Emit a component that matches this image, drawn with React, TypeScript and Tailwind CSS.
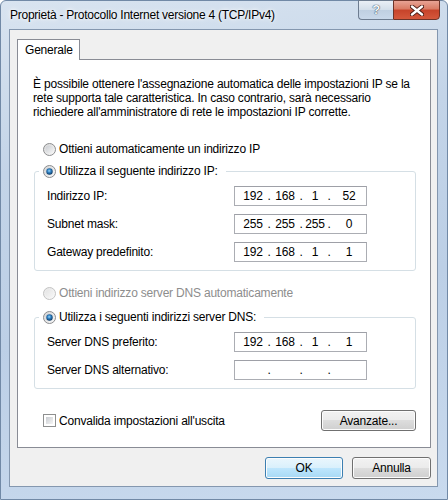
import { useId } from "react"
import clsx from "clsx"

const Radio = ({ checked = false, disabled = false }: { checked?: boolean; disabled?: boolean }) => {
  const id = useId().replace(/:/g, "")
  return (
    <svg width="13" height="13" viewBox="0 0 13 13" className="shrink-0">
      <defs>
        <linearGradient id={`o${id}`} x1="0" y1="0" x2="1" y2="1">
          <stop offset="0" stopColor={disabled ? "#e6e6e6" : "#d6d6d6"} />
          <stop offset="1" stopColor="#fafafa" />
        </linearGradient>
        <linearGradient id={`i${id}`} x1="0" y1="0" x2="1" y2="1">
          <stop offset="0" stopColor={disabled ? "#e4e4e4" : "#c9ccd1"} />
          <stop offset="1" stopColor="#f6f6f6" />
        </linearGradient>
        <radialGradient id={`d${id}`} cx="0.45" cy="0.4" r="0.6">
          <stop offset="0" stopColor="#9bd8fb" />
          <stop offset="0.45" stopColor="#2f80c2" />
          <stop offset="1" stopColor="#0c3862" />
        </radialGradient>
      </defs>
      <circle cx="6.5" cy="6.5" r="6" fill={`url(#o${id})`} stroke={disabled ? "#c3c3c3" : "#8b8c8e"} />
      <circle cx="6.5" cy="6.5" r="4" fill={`url(#i${id})`} />
      {checked && <circle cx="6.5" cy="6.5" r="3.2" fill={`url(#d${id})`} />}
    </svg>
  )
}

const Checkbox = () => (
  <div className="w-[13px] h-[13px] shrink-0 border border-[#8e8f8f] bg-white p-[2px]">
    <div className="w-full h-full bg-[linear-gradient(135deg,#c9ccd1,#f5f5f5)]" />
  </div>
)

const WinButton = ({ children, primary = false, className }: { children: React.ReactNode; primary?: boolean; className?: string }) => (
  <button
    className={clsx(
      "rounded-[3px] border text-[12px] text-black shadow-[inset_0_0_0_1px_#fcfcfc]",
      primary
        ? "border-[#3c7fb1] bg-[linear-gradient(#eaf6fd,#d9f0fc_50%,#bee6fd_50%,#a7d9f5)]"
        : "border-[#707070] bg-[linear-gradient(#f2f2f2,#ebebeb_50%,#dddddd_50%,#cfcfcf)]",
      className
    )}
  >
    {children}
  </button>
)

const IpBox = ({ parts }: { parts?: string[] }) => {
  const widths = ["w-[26px]", "w-[26px]", "w-[22px]", "w-[34px]"]
  return (
    <div className="w-[133px] h-[20px] border border-[#abadb3] border-t-[#9ea0a7] bg-white flex items-center pl-[5px] mr-[48px]">
      {widths.map((w, i) => (
        <div key={i} className="flex">
          <span className={clsx(w, "text-center")}>{parts ? parts[i] : ""}</span>
          {i < 3 && <span className="w-[6px] text-center">.</span>}
        </div>
      ))}
    </div>
  )
}

const Row = ({ label, parts }: { label: string; parts?: string[] }) => (
  <div className="flex items-center h-[20px] pl-[12px]">
    <span className="flex-1">{label}</span>
    <IpBox parts={parts} />
  </div>
)

const Group = ({ legend, children }: { legend: string; children: React.ReactNode }) => (
  <fieldset className="border border-[#d5dfe5] rounded-[3px] px-0">
    <legend className="ml-[4px] pl-[4px] pr-[8px] h-[14px] flex items-center gap-[3px]">
      <Radio checked />
      <span>{legend}</span>
    </legend>
    <div className="flex flex-col gap-[8px] mt-[8px] pb-[8px]">{children}</div>
  </fieldset>
)

export default function App() {
  return (
    <div className="w-[448px] h-[500px] flex flex-col pl-[8px] pr-[9px] pb-[12px] rounded-t-[6px] border border-[#7189a6] bg-[linear-gradient(170deg,#d9e4f0,#c3d4e8_30%,#bccfe6_60%,#c9daee)] font-['Liberation_Sans',Arial,sans-serif] text-[12px] tracking-[-0.2px] text-black leading-[14px]">
      <div className="h-[29px] flex items-start justify-between">
        <div className="pt-[7px] pl-[1px] tracking-[-0.25px] [text-shadow:0_0_6px_#fff,0_0_3px_#fff]">
          Proprietà - Protocollo Internet versione 4 (TCP/IPv4)
        </div>
        <div className="flex -mt-px -mr-[2px]">
          <div className="w-[35px] h-[20px] rounded-bl-[4px] border border-[#6d7c90] border-r-0 bg-[linear-gradient(#e9eff6,#d3deea_50%,#bfcfe1_50%,#c9d8ea)] flex items-center justify-center">
            <span className="font-bold text-[13px] text-[#f5f8fb] [text-shadow:0_0_1px_#2c3e55,0_0_1px_#2c3e55]">?</span>
          </div>
          <div className="w-[47px] h-[20px] rounded-br-[4px] border border-[#6d3328] bg-[linear-gradient(#e8a394,#d97a63_45%,#c7432a_50%,#d4583c)] flex items-center justify-center">
            <svg width="14" height="11" viewBox="0 0 14 11">
              <path d="M2 1.5 L12 9.5 M12 1.5 L2 9.5" stroke="#4a1a12" strokeWidth="4.2" strokeLinecap="round" />
              <path d="M2 1.5 L12 9.5 M12 1.5 L2 9.5" stroke="#fff" strokeWidth="2.4" strokeLinecap="round" />
            </svg>
          </div>
        </div>
      </div>

      <div className="flex-1 bg-[#f0f0f0] border border-[#8497af] flex flex-col pl-[7px] pr-[6px] pt-[9px] pb-[7px]">
        <div className="flex">
          <div className="relative z-10 -mb-px w-[63px] h-[21px] bg-white border border-b-0 border-[#898c95] pl-[7px] flex items-center">
            Generale
          </div>
        </div>
        <div className="bg-white border border-[#898c95] pl-[16px] pr-[14px] pt-[17px] pb-[16px] flex flex-col">
          <div className="-ml-px">
            <div className="whitespace-nowrap">È possibile ottenere l'assegnazione automatica delle impostazioni IP se la</div>
            <div className="whitespace-nowrap">rete supporta tale caratteristica. In caso contrario, sarà necessario</div>
            <div className="whitespace-nowrap">richiedere all'amministratore di rete le impostazioni IP corrette.</div>
          </div>

          <div className="mt-[23px] ml-[9px] h-[14px] flex items-center gap-[3px]">
            <Radio />
            <span>Ottieni automaticamente un indirizzo IP</span>
          </div>

          <div className="mt-[8px]">
            <Group legend="Utilizza il seguente indirizzo IP:">
              <Row label="Indirizzo IP:" parts={["192", "168", "1", "52"]} />
              <Row label="Subnet mask:" parts={["255", "255", "255", "0"]} />
              <Row label="Gateway predefinito:" parts={["192", "168", "1", "1"]} />
            </Group>
          </div>

          <div className="mt-[15px] ml-[9px] h-[14px] flex items-center gap-[3px] text-[#8d8d8d]">
            <Radio disabled />
            <span>Ottieni indirizzo server DNS automaticamente</span>
          </div>

          <div className="mt-[10px]">
            <Group legend="Utilizza i seguenti indirizzi server DNS:">
              <Row label="Server DNS preferito:" parts={["192", "168", "1", "1"]} />
              <Row label="Server DNS alternativo:" />
            </Group>
          </div>

          <div className="mt-[21px] h-[21px] flex items-center">
            <div className="ml-[9px] flex items-center gap-[3px] flex-1">
              <Checkbox />
              <span>Convalida impostazioni all'uscita</span>
            </div>
            <WinButton className="w-[95px] h-[21px]">Avanzate...</WinButton>
          </div>
        </div>

        <div className="mt-[9px] flex justify-end gap-[9px]">
          <WinButton primary className="w-[78px] h-[22px]">OK</WinButton>
          <WinButton className="w-[79px] h-[22px]">Annulla</WinButton>
        </div>
      </div>
    </div>
  )
}
